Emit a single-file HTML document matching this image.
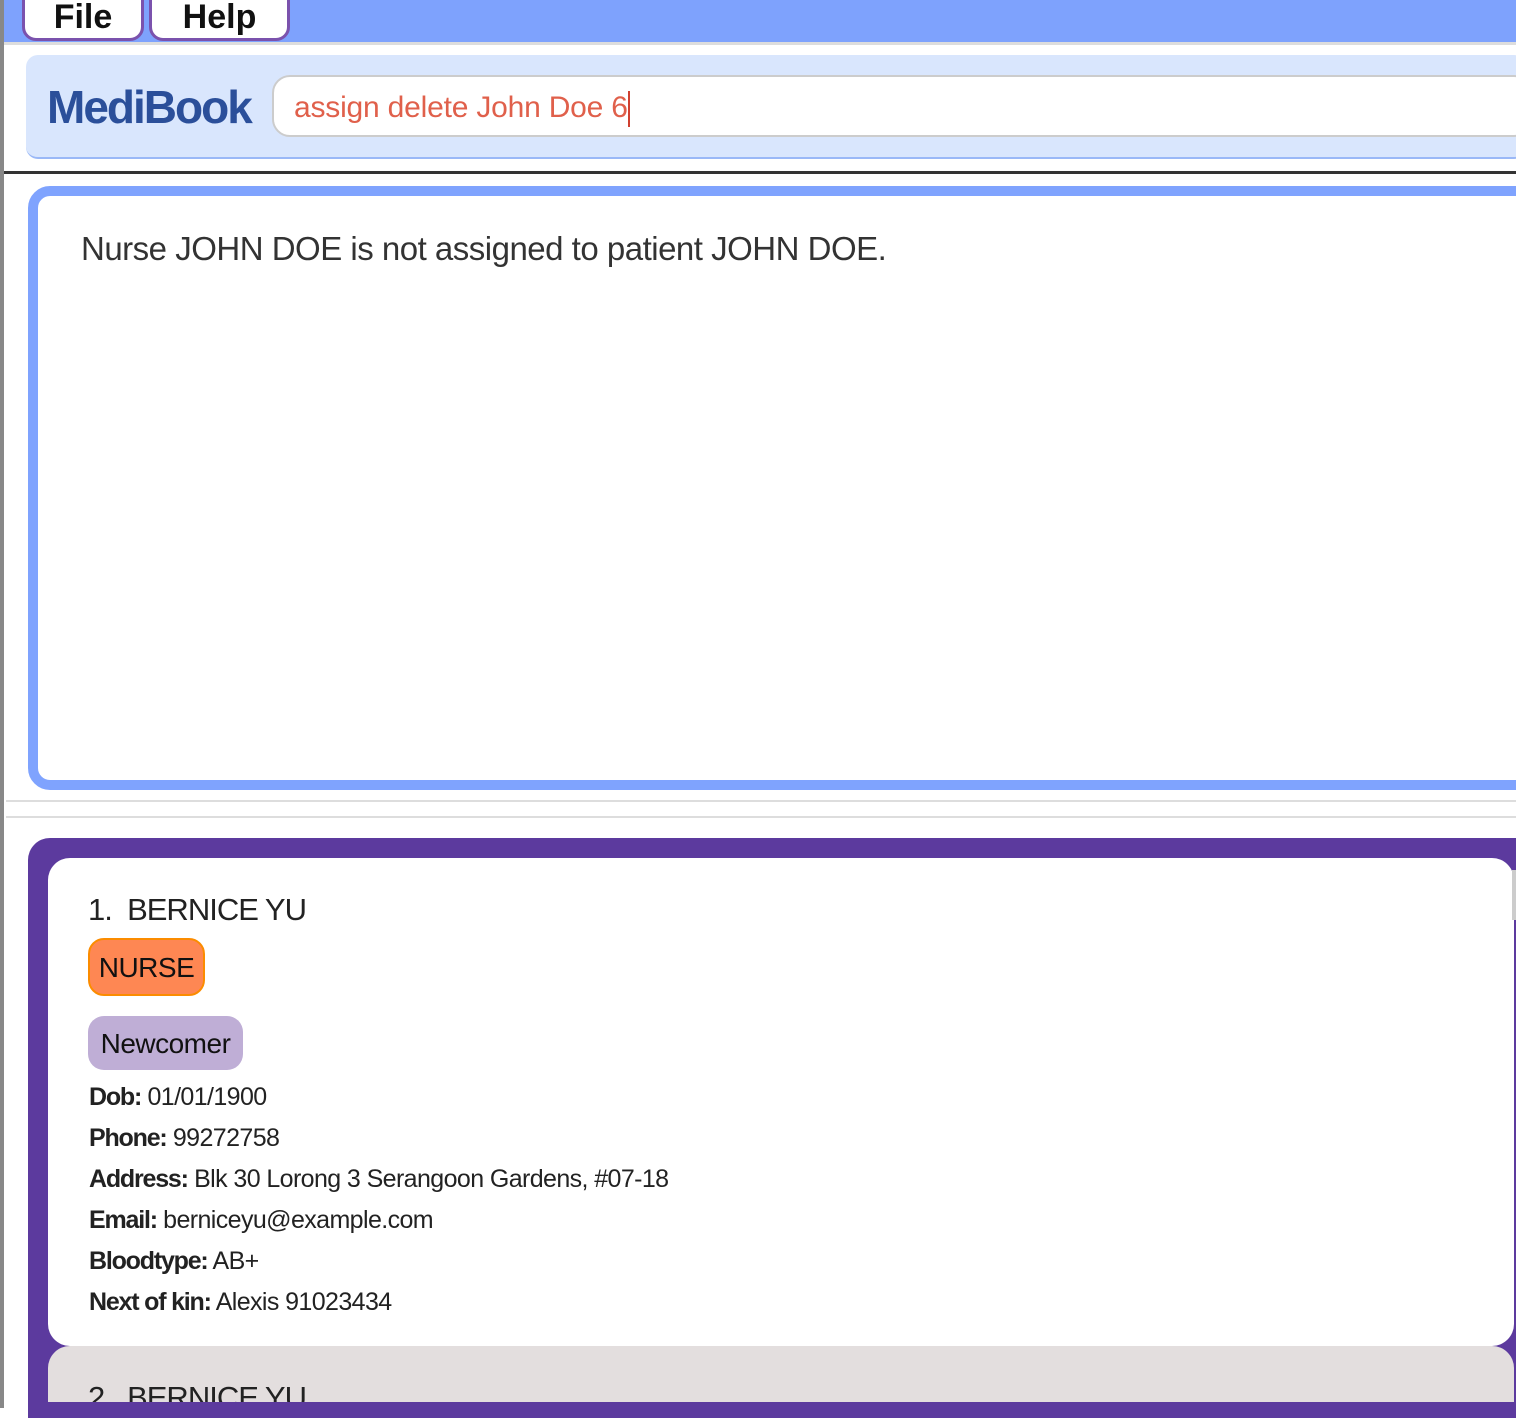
<!DOCTYPE html>
<html><head><style>
*{margin:0;padding:0;box-sizing:border-box}
body{width:1516px;height:1408px;overflow:hidden;background:#fff;position:relative;font-family:"Liberation Sans",sans-serif;color:#222}
.a{position:absolute}
.btn{position:absolute;top:-14px;height:55px;background:#fff;border:3px solid #7b52ad;border-radius:14px;font-size:34px;font-weight:bold;text-align:center;line-height:56px;color:#111}
.d{position:absolute;left:89px;font-size:25px;color:#222;letter-spacing:-0.6px}
.d b{letter-spacing:-1.2px}
</style></head><body>
<div class="a" style="left:0;top:0;width:4px;height:1408px;background:#888"></div>
<div class="a" style="left:4px;top:0;width:1512px;height:42px;background:#7ea2fd"></div>
<div class="btn" style="left:22px;width:122px">File</div>
<div class="btn" style="left:149px;width:141px">Help</div>
<div class="a" style="left:4px;top:42px;width:1512px;height:3px;background:#ddd"></div>
<div class="a" style="left:26px;top:55px;width:1500px;height:104px;background:#d9e6fd;border-radius:12px;border-bottom:2px solid #9ab8f7"></div>
<div class="a" style="left:47px;top:80px;font-size:46px;font-weight:bold;color:#2b4f9a;letter-spacing:-2px">MediBook</div>
<div class="a" style="left:272px;top:75px;width:1260px;height:62px;background:#fff;border:2px solid #ccc;border-radius:18px"></div>
<div class="a" style="left:294px;top:91px;font-size:30px;color:#e0604b;letter-spacing:-0.2px">assign delete John Doe 6<span style="display:inline-block;width:2px;height:36px;background:#d04030;vertical-align:middle"></span></div>
<div class="a" style="left:4px;top:171px;width:1512px;height:3px;background:#333"></div>
<div class="a" style="left:28px;top:186px;width:1510px;height:604px;border:10px solid #7fa3fe;border-radius:22px;background:#fff"></div>
<div class="a" style="left:81px;top:230px;font-size:33px;color:#333;letter-spacing:-0.5px">Nurse JOHN DOE is not assigned to patient JOHN DOE.</div>
<div class="a" style="left:6px;top:800px;width:1510px;height:2px;background:#ddd"></div>
<div class="a" style="left:6px;top:816px;width:1510px;height:2px;background:#ddd"></div>
<div class="a" style="left:28px;top:838px;width:1510px;height:580px;background:#5c3a9e;border-radius:22px 0 0 0"></div>
<div class="a" style="left:48px;top:858px;width:1466px;height:488px;background:#fff;border-radius:22px"></div>
<div class="a" style="left:48px;top:1346px;width:1466px;height:56px;background:#e3dede;border-radius:22px 22px 0 0"></div>
<div class="a" style="left:88px;top:892px;font-size:31px;color:#222;letter-spacing:-1px">1.&nbsp; BERNICE YU</div>
<div class="a" style="left:88px;top:938px;width:117px;height:58px;background:#fe8753;border:2px solid #fb8c00;border-radius:16px;font-size:28px;line-height:56px;text-align:center;color:#111;letter-spacing:-0.5px">NURSE</div>
<div class="a" style="left:88px;top:1016px;width:155px;height:54px;background:#bfaed6;border-radius:16px;font-size:28px;line-height:56px;text-align:center;color:#111;letter-spacing:-0.5px">Newcomer</div>
<div class="d" style="top:1083px"><b>Dob:</b> 01/01/1900</div>
<div class="d" style="top:1124px"><b>Phone:</b> 99272758</div>
<div class="d" style="top:1165px"><b>Address:</b> Blk 30 Lorong 3 Serangoon Gardens, #07-18</div>
<div class="d" style="top:1206px"><b>Email:</b> berniceyu@example.com</div>
<div class="d" style="top:1247px"><b>Bloodtype:</b> AB+</div>
<div class="d" style="top:1288px"><b>Next of kin:</b> Alexis 91023434</div>
<div class="a" style="left:88px;top:1378px;font-size:31px;color:#222;height:24px;overflow:hidden;line-height:40px;letter-spacing:-1px">2.&nbsp; BERNICE YU</div>
<div class="a" style="left:1512px;top:870px;width:4px;height:50px;background:#ccc"></div>
</body></html>
